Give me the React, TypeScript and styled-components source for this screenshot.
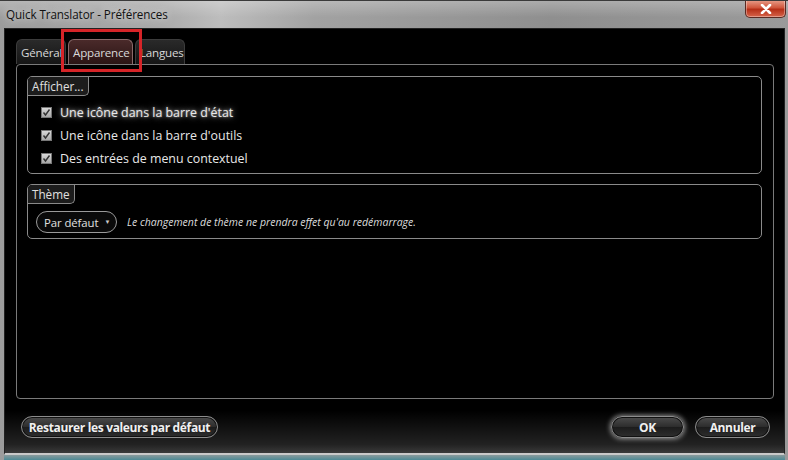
import React from "react";
import styled, { createGlobalStyle } from "styled-components";

const Global = createGlobalStyle`
  html, body { margin: 0; padding: 0; background: #6a8a92; }
  body { font-family: "Open Sans", "Noto Sans", sans-serif; }
`;

const Window = styled.div`
  position: relative;
  width: 788px;
  height: 460px;
  display: flex;
  flex-direction: column;
  background: linear-gradient(90deg, #9c9c9c 0%, #a9a9a9 20%, #bdbdbd 28%, #a2a2a2 40%, #8f8f8f 70%, #9a9a9a 100%);
  box-sizing: border-box;
  border-top: 1px solid #3a3a3a;
  overflow: hidden;
`;

const TitleBar = styled.div`
  height: 27px;
  flex: none;
  display: flex;
  align-items: center;
  justify-content: space-between;
  padding-left: 6px;
  background: linear-gradient(180deg, rgba(255,255,255,0.25) 0%, rgba(255,255,255,0) 60%);
`;

const Title = styled.div`
  font-size: 11.7px;
  color: #111;
  letter-spacing: -0.1px;
  text-shadow: 0 0 8px rgba(255,255,255,0.9);
  margin-top: -1px;
`;

const CloseButton = styled.div`
  align-self: flex-start;
  width: 41px;
  height: 18px;
  margin-right: 2px;
  margin-top: -1px;
  box-sizing: border-box;
  border: 1px solid #5a2a22;
  border-top: none;
  border-radius: 0 0 5px 5px;
  background: linear-gradient(180deg, #e9a08c 0%, #d0563c 45%, #b62f17 55%, #d6644a 100%);
  display: flex;
  align-items: center;
  justify-content: center;
  box-shadow: inset 0 0 0 1px rgba(255,255,255,0.35);
`;

const Client = styled.div`
  flex: 1;
  margin: 0 3px 0 4px;
  background: linear-gradient(180deg, #000 0%, #000 90%, #222 98%, #3a3a3a 100%);
  border: 1px solid #222;
  border-bottom: 2px solid #c9c9c9;
  display: flex;
  flex-direction: column;
  padding: 8px 10px 0 11px;
  box-sizing: border-box;
  position: relative;
`;

const BottomStrip = styled.div`
  height: 5px;
  flex: none;
  margin: 0 3px 0 4px;
  background: linear-gradient(180deg, #8a9a9c 0%, #4d8a95 100%);
`;

const Tabs = styled.div`
  display: flex;
  gap: 2px;
  height: 27px;
  align-items: flex-end;
`;

const Tab = styled.div<{ $active?: boolean; $w: number }>`
  width: ${p => p.$w}px;
  height: 25px;
  padding: 0 0 0 4px;
  box-sizing: border-box;
  display: flex;
  align-items: center;
  overflow: hidden;
  white-space: nowrap;
  font-size: 11.6px;
  letter-spacing: -0.2px;
  color: #d8d8d8;
  border: 1px solid ${p => (p.$active ? "#8a6a6a" : "#3c3c3c")};
  border-bottom: none;
  border-radius: 6px 6px 0 0;
  background: ${p =>
    p.$active
      ? "linear-gradient(180deg, #4a2a2a 0%, #2a1414 100%)"
      : "linear-gradient(180deg, #2a2a2a 0%, #151515 100%)"};
`;

const Panel = styled.div`
  height: 322px;
  border: 1px solid #7a7a7a;
  border-radius: 4px;
  padding: 11px 11px 0 10px;
  display: flex;
  flex-direction: column;
  gap: 10px;
`;

const Group = styled.div<{ $h: number }>`
  position: relative;
  height: ${p => p.$h}px;
  box-sizing: border-box;
  border: 1px solid #8a8a8a;
  border-radius: 5px;
  display: flex;
  flex-direction: column;
`;

const Legend = styled.div`
  align-self: flex-start;
  height: 19px;
  box-sizing: border-box;
  padding: 0 4px 0 4px;
  font-size: 11.7px;
  line-height: 18px;
  color: #e0e0e0;
  background: #1c1c1c;
  border-right: 1px solid #8a8a8a;
  border-bottom: 1px solid #8a8a8a;
  border-radius: 4px 0 5px 0;
`;

const CheckList = styled.div`
  display: flex;
  flex-direction: column;
  gap: 6px;
  padding: 8px 0 0 12px;
`;

const CheckRow = styled.div<{ $glow?: boolean }>`
  display: flex;
  align-items: center;
  height: 17px;
  gap: 8px;
  font-size: 12.4px;
  color: #e8e8e8;
  text-shadow: ${p => (p.$glow ? "0 0 6px rgba(255,255,255,0.75), 0 0 2px rgba(255,255,255,0.5)" : "none")};
`;

const Box = styled.div`
  width: 11px;
  height: 11px;
  margin-left: 1px;
  box-sizing: border-box;
  background: linear-gradient(180deg, #d8d8d8 0%, #a8a8a8 100%);
  border: 1px solid #777;
  display: flex;
  align-items: center;
  justify-content: center;
`;

const ThemeRow = styled.div`
  display: flex;
  align-items: center;
  gap: 10px;
  padding: 7px 0 0 8px;
`;

const Combo = styled.div`
  width: 81px;
  height: 22px;
  box-sizing: border-box;
  padding: 0 0 0 7px;
  display: flex;
  align-items: center;
  gap: 6px;
  border: 1px solid #9a9a9a;
  border-radius: 11px;
  font-size: 11.4px;
  letter-spacing: -0.1px;
  color: #e0e0e0;
  background: #0a0a0a;
`;

const Arrow = styled.span`
  font-size: 6px;
  color: #ccc;
`;

const Note = styled.div`
  font-size: 10.5px;
  font-style: italic;
  color: #dcdcdc;
`;

const ButtonRow = styled.div`
  display: flex;
  align-items: center;
  padding: 17px 4px 0 5px;
  gap: 11px;
`;

const Button = styled.div<{ $w: number; $glow?: boolean }>`
  width: ${p => p.$w}px;
  height: 22px;
  box-sizing: border-box;
  border: 1px solid #8c8c8c;
  border-radius: 11px;
  background: linear-gradient(180deg, #4c4c4c 0%, #2c2c2c 50%, #1c1c1c 51%, #2e2e2e 100%);
  display: flex;
  align-items: center;
  justify-content: center;
  font-size: 12px;
  font-weight: 700;
  color: #f0f0f0;
  letter-spacing: -0.35px;
  box-shadow: inset 0 0 0 1px #111${p => (p.$glow ? ", 0 0 5px 1px rgba(255,255,255,0.55)" : "")};
`;

const Spacer = styled.div`
  flex: 1;
`;

const Annotation = styled.div`
  position: absolute;
  left: 56px;
  top: 0px;
  width: 75px;
  height: 37px;
  border: 3px solid #d62428;
  pointer-events: none;
`;

export default function App() {
  return (
    <>
      <Global />
      <Window>
        <TitleBar>
          <Title>Quick Translator - Préférences</Title>
          <CloseButton>
            <svg width="12" height="10" viewBox="0 0 12 10">
              <path d="M2 1 L10 9 M10 1 L2 9" stroke="#fff" strokeWidth="2.6" strokeLinecap="round" />
            </svg>
          </CloseButton>
        </TitleBar>
        <Client>
          <Tabs>
            <Tab $w={50}>Général</Tab>
            <Tab $w={65} $active>Apparence</Tab>
            <Tab $w={50}>Langues</Tab>
          </Tabs>
          <Panel>
            <Group $h={98}>
              <Legend>Afficher...</Legend>
              <CheckList>
                {[
                  "Une icône dans la barre d'état",
                  "Une icône dans la barre d'outils",
                  "Des entrées de menu contextuel",
                ].map((t, i) => (
                  <CheckRow key={t} $glow={i === 0}>
                    <Box>
                      <svg width="9" height="9" viewBox="0 0 9 9">
                        <path d="M1.5 4.5 L3.5 7 L7.5 1.5" stroke="#333" strokeWidth="1.4" fill="none" />
                      </svg>
                    </Box>
                    {t}
                  </CheckRow>
                ))}
              </CheckList>
            </Group>
            <Group $h={55}>
              <Legend>Thème</Legend>
              <ThemeRow>
                <Combo>
                  Par défaut <Arrow>▼</Arrow>
                </Combo>
                <Note>Le changement de thème ne prendra effet qu'au redémarrage.</Note>
              </ThemeRow>
            </Group>
          </Panel>
          <ButtonRow>
            <Button $w={197}>Restaurer les valeurs par défaut</Button>
            <Spacer />
            <Button $w={73} $glow>OK</Button>
            <Button $w={75}>Annuler</Button>
          </ButtonRow>
          <Annotation />
        </Client>
        <BottomStrip />
      </Window>
    </>
  );
}
